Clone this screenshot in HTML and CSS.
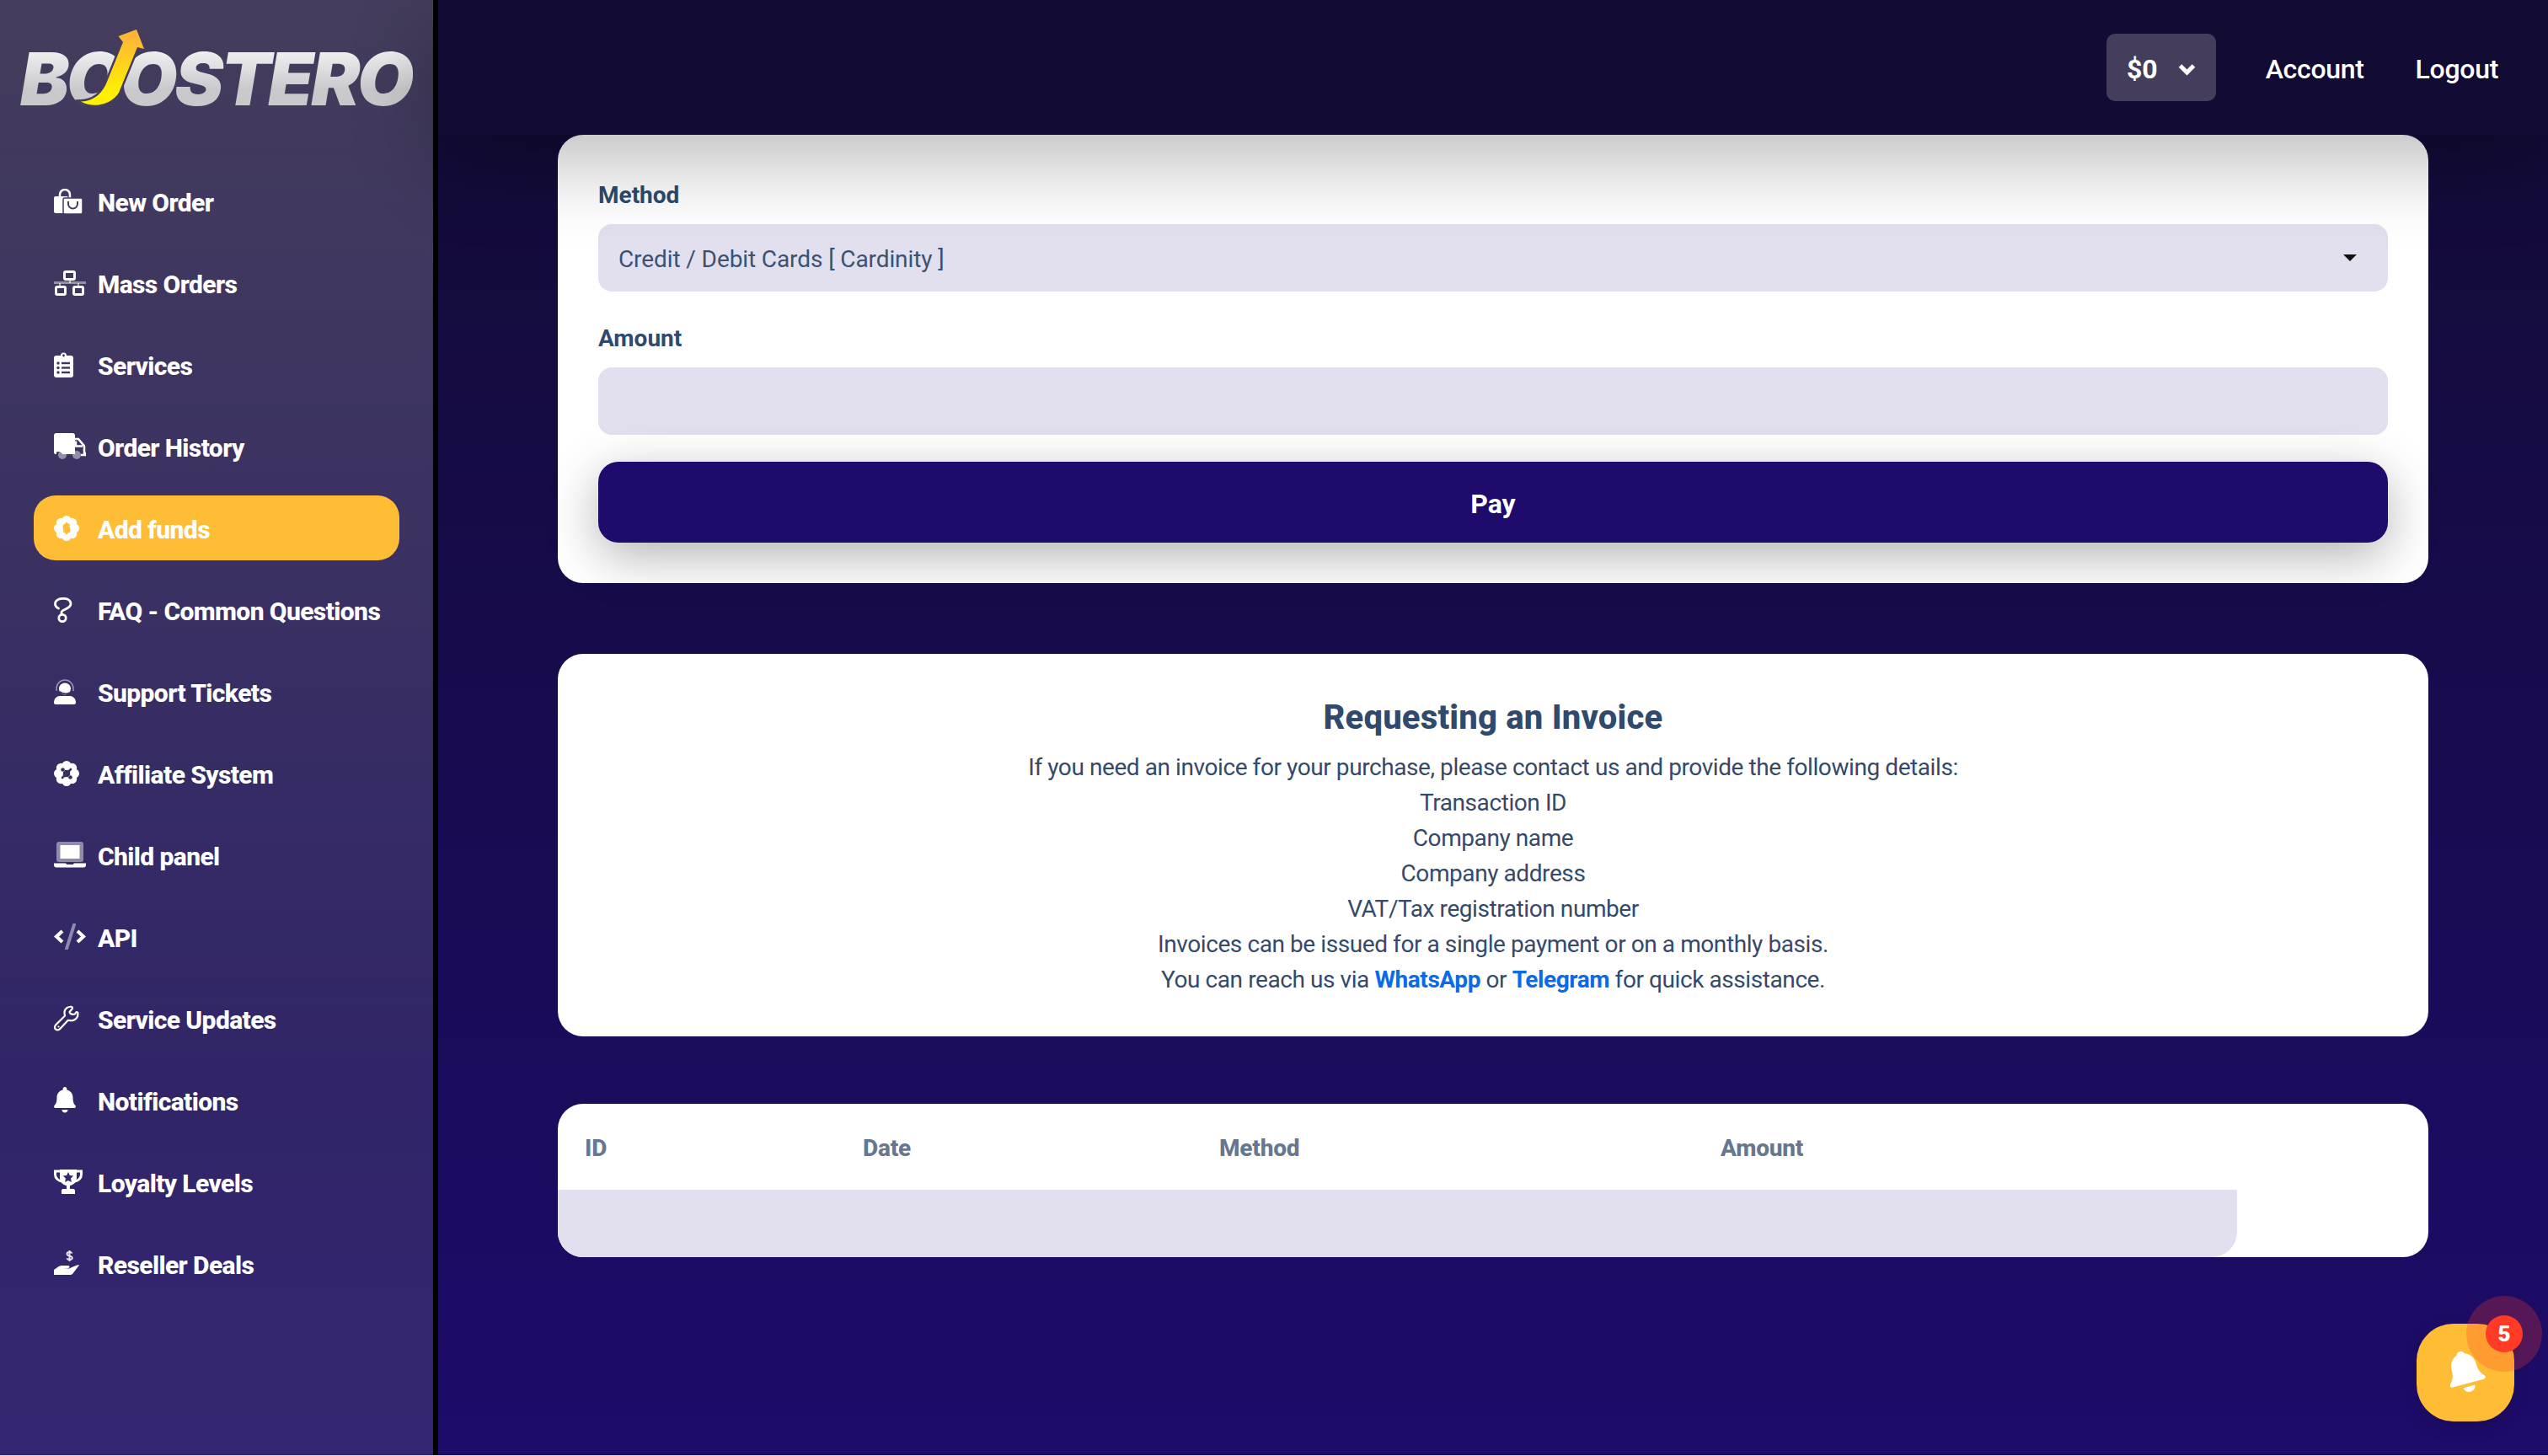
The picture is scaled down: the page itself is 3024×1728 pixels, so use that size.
FILE: index.html
```html
<!DOCTYPE html>
<html lang="en">
<head>
    <meta charset="UTF-8">
    <meta name="viewport" content="width=device-width, initial-scale=1.0">
    <title>Boostero - Add funds</title>
    <link rel="stylesheet" href="styles.css">
</head>
<body>
<div class="app">
    <aside class="sidebar">
        <a class="logo" href="#">
            <span class="logo-text">BOOSTERO</span>
            <svg class="logo-arrow" width="90" height="100" viewBox="90 30 90 100">
                <defs>
                    <linearGradient id="swoosh" x1="0" y1="0" x2="0" y2="1">
                        <stop offset="0" stop-color="#fdaf3c"/>
                        <stop offset="0.85" stop-color="#fff200"/>
                    </linearGradient>
                </defs>
                <path d="M96 120.500C112 120 122 110 127 97L146 50L140.500 43L162 35L171 58L163 56L141 110C134 122 114 130 96 120.500Z" fill="url(#swoosh)" stroke="#443d5c" stroke-width="5" paint-order="stroke"/>
            </svg>
        </a>
        <nav class="menu">
            <a class="menu-item" href="#">
                <span class="menu-icon"><svg width="34" height="30" viewBox="0 0 34 30"><path d="M7 10V7a6 6 0 0 1 12 0v5" fill="none" stroke="#fff" stroke-width="2.5"/><rect x="0" y="9" width="17" height="20" rx="2" fill="#fff"/><rect x="11" y="11" width="23" height="19" rx="2" fill="#fff" stroke="#443a60" stroke-width="1.5"/><path d="M17 15v3a5.500 5.500 0 0 0 11 0v-3" fill="none" stroke="#443a60" stroke-width="2"/></svg></span>
                New Order
            </a>
            <a class="menu-item" href="#">
                <span class="menu-icon"><svg width="38" height="30" viewBox="0 0 38 30"><rect x="0" y="13" width="38" height="3" fill="#fff" opacity=".45"/><path d="M19 11v4M7 15v5M29 15v5" stroke="#fff" stroke-width="2" opacity=".6"/><rect x="12.500" y="1.500" width="12" height="9" rx="1.500" fill="none" stroke="#fff" stroke-width="3"/><rect x="2.500" y="19.500" width="11" height="9" rx="1.500" fill="none" stroke="#fff" stroke-width="3"/><rect x="23.500" y="19.500" width="11" height="9" rx="1.500" fill="none" stroke="#fff" stroke-width="3"/></svg></span>
                Mass Orders
            </a>
            <a class="menu-item" href="#">
                <span class="menu-icon"><svg width="23" height="30" viewBox="0 0 23 30"><path d="M3 4h5a3.500 3.500 0 0 1 7 0h5a3 3 0 0 1 3 3v20a3 3 0 0 1-3 3H3a3 3 0 0 1-3-3V7a3 3 0 0 1 3-3Z" fill="#fff"/><g fill="#413660"><circle cx="11.500" cy="4" r="1.400"/><circle cx="5" cy="13" r="1.700"/><circle cx="5" cy="18.500" r="1.700"/><circle cx="5" cy="24" r="1.700"/><rect x="9" y="11.800" width="10" height="2.400"/><rect x="9" y="17.300" width="10" height="2.400"/><rect x="9" y="22.800" width="10" height="2.400"/></g></svg></span>
                Services
            </a>
            <a class="menu-item" href="#">
                <span class="menu-icon"><svg width="38" height="31" viewBox="0 0 38 31"><path d="M3 0h19a3 3 0 0 1 3 3v22H10a5 5 0 0 0-7-2.500V25H2a2 2 0 0 1-2-2V3a3 3 0 0 1 3-3Z" fill="#fff"/><path d="M25 7h4l6 7a3 3 0 0 1 1 2v8h2v2h-6M26 9.500v6h8" fill="none" stroke="#fff" stroke-width="2.500"/><g fill="#fff" opacity=".45"><circle cx="10" cy="26" r="5"/><circle cx="27" cy="26" r="5"/></g></svg></span>
                Order History
            </a>
            <a class="menu-item is-active" href="#">
                <span class="menu-icon"><svg width="30" height="30" viewBox="0 0 30 30"><g fill="#fff"><circle cx="15" cy="5.500" r="5.500"/><circle cx="15" cy="24.500" r="5.500"/><circle cx="5.500" cy="15" r="5.500"/><circle cx="24.500" cy="15" r="5.500"/><circle cx="8.300" cy="8.300" r="5.500"/><circle cx="21.700" cy="8.300" r="5.500"/><circle cx="8.300" cy="21.700" r="5.500"/><circle cx="21.700" cy="21.700" r="5.500"/></g><path d="M18.500 11.800C18 10.500 16.500 10 15 10c-2 0-3.500 1-3.500 2.500 0 3.500 7 1.800 7 5 0 1.500-1.500 2.500-3.500 2.500-1.600 0-3-.6-3.500-2M15 7.800v14.400" fill="none" stroke="#ffbd35" stroke-width="1.900"/></svg></span>
                Add funds
            </a>
            <a class="menu-item" href="#">
                <span class="menu-icon"><svg width="22" height="30" viewBox="0 0 22 30"><path d="M9 20.500v-3c0-3.500 11-3.500 11-10 0-4-4-6.200-9-6.200S1.500 3.500 1.500 7.500c0 2.500 1.500 4.500 4 5.500" fill="none" stroke="#fff" stroke-width="2.800" stroke-linecap="round"/><circle cx="10" cy="24.500" r="4.200" fill="none" stroke="#fff" stroke-width="2.800"/></svg></span>
                FAQ - Common Questions
            </a>
            <a class="menu-item" href="#">
                <span class="menu-icon"><svg width="26" height="30" viewBox="0 0 26 30"><path d="M3 14V11a10 10 0 0 1 20 0v3" fill="none" stroke="#fff" stroke-width="1.500" opacity=".5"/><circle cx="13" cy="11.500" r="7" fill="#fff"/><path d="M7 15c3 3 9 3 12 1" fill="none" stroke="#3e3262" stroke-width="1.800"/><path d="M0 28c0-5 3.500-8 7-8h12c3.500 0 7 3 7 8a2 2 0 0 1-2 2H2a2 2 0 0 1-2-2Z" fill="#fff"/></svg></span>
                Support Tickets
            </a>
            <a class="menu-item" href="#">
                <span class="menu-icon"><svg width="30" height="30" viewBox="0 0 30 30"><g fill="#fff"><circle cx="15" cy="5.500" r="5.500"/><circle cx="15" cy="24.500" r="5.500"/><circle cx="5.500" cy="15" r="5.500"/><circle cx="24.500" cy="15" r="5.500"/><circle cx="8.300" cy="8.300" r="5.500"/><circle cx="21.700" cy="8.300" r="5.500"/><circle cx="8.300" cy="21.700" r="5.500"/><circle cx="21.700" cy="21.700" r="5.500"/></g><g fill="#3d3063"><circle cx="10.500" cy="10.500" r="2.300"/><circle cx="19.500" cy="19.500" r="2.300"/></g><path d="M20 10 10 20" stroke="#3d3063" stroke-width="2.600" stroke-linecap="round"/></svg></span>
                Affiliate System
            </a>
            <a class="menu-item" href="#">
                <span class="menu-icon"><svg width="38" height="31" viewBox="0 0 38 31"><rect x="3" y="0" width="32" height="24" rx="3" fill="#fff" opacity=".45"/><rect x="7.500" y="4" width="23" height="16" fill="#fff"/><path d="M0 25.500h14l1.500 1.500h7l1.500-1.500h14v2a3 3 0 0 1-3 3H3a3 3 0 0 1-3-3Z" fill="#fff"/></svg></span>
                Child panel
            </a>
            <a class="menu-item" href="#">
                <span class="menu-icon"><svg width="38" height="31" viewBox="0 0 38 31"><path d="M10 9 3 15.500 10 22M28 9l7 6.500-7 6.500" fill="none" stroke="#fff" stroke-width="4.200"/><path d="M24 1.500 15 30" stroke="#fff" stroke-width="4" stroke-linecap="round" opacity=".45"/></svg></span>
                API
            </a>
            <a class="menu-item" href="#">
                <span class="menu-icon"><svg width="30" height="31" viewBox="0 0 30 31"><path d="M25 10.500c-3.500 1-6.500-.5-6.500-2.500l3-3.500c.8-1 .5-2.500-1-2.700-3.500-.3-7.500 2-8 6.200-.2 2 .2 3.200.6 4.500L2.500 23c-2 2-1.800 4.300-.5 5.500s3.500 1.500 5.300-.5l9.500-10.200c4 1 8.300.2 10.700-3.500.8-1.400 1-3.300 1-4.800 0-1.300-1.500-1.800-2.500-.8Z" fill="none" stroke="#fff" stroke-width="2.200" stroke-linejoin="round"/><circle cx="5.500" cy="25.500" r="1.100" fill="#fff"/></svg></span>
                Service Updates
            </a>
            <a class="menu-item" href="#">
                <span class="menu-icon"><svg width="26" height="31" viewBox="0 0 26 31"><path d="M13 0c1.400 0 2.400 1 2.400 2.500v.9C20 4.500 22.500 8 22.500 12.500c0 6 1.500 8 3 9.500.7.800.5 3-1.500 3H2c-2 0-2.200-2.200-1.500-3 1.500-1.500 3-3.500 3-9.500 0-4.500 2.500-8 7.100-9.100v-.9C10.600 1 11.600 0 13 0Z" fill="#fff"/><path d="M9.500 27h7c0 2-1.500 3.500-3.500 3.500S9.500 29 9.500 27Z" fill="#fff"/></svg></span>
                Notifications
            </a>
            <a class="menu-item" href="#">
                <span class="menu-icon"><svg width="34" height="31" viewBox="0 0 34 31"><path d="M7 1h20v10c0 5-4 8.500-8 9v4h4c1.500 0 2 1 2 2.500V30H9v-3.500C9 25 9.500 24 11 24h4v-4c-4-.5-8-4-8-9Z" fill="#fff"/><path d="M7 3H1.500v4c0 4.500 4 7.500 8 8M27 3h5.500v4c0 4.500-4 7.500-8 8" fill="none" stroke="#fff" stroke-width="3"/><path d="m17 4 1.900 4 4.300.6-3.100 3 .7 4.300-3.800-2-3.800 2 .7-4.300-3.100-3 4.300-.6Z" fill="#35266f"/></svg></span>
                Loyalty Levels
            </a>
            <a class="menu-item" href="#">
                <span class="menu-icon"><svg width="34" height="31" viewBox="0 0 34 31"><path d="M21.500 3.500c-.4-1-1.500-1.500-3-1.500-1.800 0-3 .8-3 2.200 0 3 6.300 1.700 6.300 4.600 0 1.400-1.300 2.200-3.200 2.200-1.500 0-2.700-.6-3.200-1.700M18.500 0v13" fill="none" stroke="#fff" stroke-width="1.900" opacity=".9"/><path d="M0 23l5-3.500c1.500-1 3-1.500 5-1.500h7c2 0 2 3 0 3h-5l6 .5 8-3.500c2-1 3.500-1 4-.5L22 28c-1 .8-2 1-3 1H0Z" fill="#fff"/></svg></span>
                Reseller Deals
            </a>
        </nav>
    </aside>

    <main class="main">
        <header class="topbar">
            <a class="balance" href="#">$0
                <svg width="21" height="15" viewBox="0 0 21 15"><path d="M2.500 3 10.500 11 18.500 3" fill="none" stroke="#fff" stroke-width="5"/></svg>
            </a>
            <a class="top-link" href="#">Account</a>
            <a class="top-link" href="#">Logout</a>
        </header>

        <div class="content">
            <section class="card pay-card">
                <label class="field-label">Method</label>
                <div class="select-wrap">
                    <select class="field">
                        <option>Credit / Debit Cards [ Cardinity ]</option>
                    </select>
                </div>
                <label class="field-label">Amount</label>
                <input class="field" type="text">
                <button class="pay-btn">Pay</button>
            </section>

            <section class="card invoice-card">
                <h2>Requesting an Invoice</h2>
                <p>If you need an invoice for your purchase, please contact us and provide the following details:</p>
                <p>Transaction ID</p>
                <p>Company name</p>
                <p>Company address</p>
                <p>VAT/Tax registration number</p>
                <p>Invoices can be issued for a single payment or on a monthly basis.</p>
                <p>You can reach us via <a href="#">WhatsApp</a> or <a href="#">Telegram</a> for quick assistance.</p>
            </section>

            <section class="card table-card">
                <table class="history">
                    <thead>
                        <tr>
                            <th class="col-id">ID</th>
                            <th class="col-date">Date</th>
                            <th class="col-method">Method</th>
                            <th class="col-amount">Amount</th>
                        </tr>
                    </thead>
                    <tbody>
                        <tr><td colspan="4"></td></tr>
                    </tbody>
                </table>
            </section>
        </div>
    </main>
</div>

<button class="bell-btn">
    <svg width="50" height="56" viewBox="0 0 50 56"><g transform="rotate(-15 25 28)"><circle cx="25" cy="7" r="5" fill="#fff"/><path d="M25 5c9 0 15 7 15 16 0 8 2 12 6 16 1.500 2 .5 4-2 4H6c-2.500 0-3.500-2-2-4 4-4 6-8 6-16 0-9 6-16 15-16Z" fill="#fff"/><path d="M18 45h14c0 4-3 6.500-7 6.500S18 49 18 45Z" fill="#fff"/></g></svg>
    <span class="bell-halo"></span>
    <span class="bell-count">5</span>
</button>
</body>
</html>
```

FILE: styles.css
```css
* {
    box-sizing: border-box;
}

html {
    background: #e2e0ee;
}

body {
    margin: 0;
    height: 1727px;
    overflow: hidden;
    font-family: Roboto, "Liberation Sans", sans-serif;
    color: #2f4a6d;
    background: linear-gradient(180deg, #120b33 0%, #1e0b6b 100%);
}

a {
    text-decoration: none;
}

.app {
    display: flex;
    height: 100%;
}

/* sidebar */
.sidebar {
    width: 520px;
    flex-shrink: 0;
    padding: 0 40px;
    border-right: 6px solid #000;
    background: linear-gradient(180deg, #443d5c 0%, #312568 75%, #352573 100%);
}

.logo {
    display: block;
    position: relative;
    height: 200px;
    margin: 0 -16px;
}

.logo-text {
    display: block;
    padding-top: 46px;
    font-family: Inter, Roboto, sans-serif;
    font-size: 87px;
    line-height: 96px;
    font-weight: 900;
    font-style: italic;
    letter-spacing: -3.3px;
    white-space: nowrap;
    background: linear-gradient(180deg, #fff 30%, #c9c9cc 75%);
    -webkit-background-clip: text;
    background-clip: text;
    color: transparent;
}

.logo-arrow {
    position: absolute;
    left: 66px;
    top: 30px;
}

.menu {
    display: flex;
    flex-direction: column;
    gap: 20px;
}

.menu-item {
    display: flex;
    align-items: center;
    height: 77px;
    padding: 4px 0 0 24px;
    border-radius: 26px;
    font-size: 30px;
    font-weight: 800;
    letter-spacing: -0.6px;
    color: #fff;
}

.menu-item.is-active {
    background: #ffbd35;
}

.menu-icon {
    display: flex;
    align-items: center;
    width: 52px;
    flex-shrink: 0;
    margin-top: -4px;
}

/* top bar */
.main {
    flex: 1;
    min-width: 0;
}

.topbar {
    position: relative;
    z-index: 2;
    display: flex;
    align-items: center;
    justify-content: flex-end;
    gap: 61px;
    height: 160px;
    padding-right: 59px;
    background: #120b33;
    box-shadow: 0 30px 100px rgba(0, 0, 0, 0.28);
}

.balance {
    display: flex;
    align-items: center;
    gap: 24px;
    height: 80px;
    margin-right: -2px;
    padding: 4px 24px 0;
    border-radius: 10px;
    background: #443d5c;
    color: #fff;
    font-size: 32px;
    font-weight: 700;
}

.top-link {
    padding-top: 4px;
    color: #fff;
    font-size: 32px;
    font-weight: 500;
    letter-spacing: -0.3px;
}

/* cards */
.content {
    display: flex;
    flex-direction: column;
    padding: 0 142px;
}

.card {
    border-radius: 30px;
    background: #fff;
}

.pay-card {
    padding: 48px 48px 48px;
}

.field-label {
    display: block;
    height: 58px;
    font-size: 28px;
    line-height: 47px;
    font-weight: 700;
}

.pay-card .field-label + .field,
.select-wrap {
    margin-bottom: 32px;
}

.field {
    display: block;
    width: 100%;
    height: 80px;
    padding: 3px 24px 0;
    border: none;
    border-radius: 16px;
    background: #e2e0ee;
    font-family: inherit;
    font-size: 28px;
    letter-spacing: -0.1px;
    color: #3b5273;
    appearance: none;
}

.select-wrap {
    position: relative;
}

.select-wrap::after {
    content: "";
    position: absolute;
    right: 37px;
    top: 36px;
    border-left: 8px solid transparent;
    border-right: 8px solid transparent;
    border-top: 8px solid #111;
}

.pay-btn {
    display: block;
    width: 100%;
    height: 96px;
    padding-top: 4px;
    border: none;
    border-radius: 24px;
    background: #1e0b6b;
    color: #fff;
    font-family: inherit;
    font-size: 32px;
    font-weight: 700;
    box-shadow: 0 16px 60px rgba(0, 0, 0, 0.3);
}

.invoice-card {
    margin-top: 84px;
    height: 454px;
    padding-top: 49px;
    text-align: center;
    font-size: 28px;
    line-height: 42px;
    letter-spacing: -0.42px;
}

.invoice-card h2 {
    margin: 0 0 11px;
    font-size: 40px;
    line-height: 54px;
    font-weight: 800;
    letter-spacing: 0.2px;
}

.invoice-card p {
    margin: 0;
    color: #35496b;
}

.invoice-card a {
    color: #0a6ae8;
    font-weight: 700;
}

/* history table */
.table-card {
    margin-top: 80px;
    height: 182px;
    padding-right: 227px;
}

.history {
    width: 100%;
    height: 100%;
    border-collapse: collapse;
    table-layout: fixed;
}

.history th {
    height: 102px;
    padding: 2px 0 0 32px;
    text-align: left;
    font-size: 28px;
    font-weight: 800;
    letter-spacing: -0.2px;
    color: #66788f;
}

.history td {
    height: 80px;
    padding: 0;
    background: #e2e0ee;
    border-radius: 0 0 30px 30px;
}

.col-id { width: 330px; }
.col-date { width: 423px; }
.col-method { width: 595px; }

/* floating bell */
.bell-btn {
    position: fixed;
    left: 2868px;
    top: 1571px;
    display: flex;
    align-items: center;
    justify-content: center;
    width: 116px;
    height: 116px;
    padding: 0;
    border: none;
    border-radius: 44px;
    background: #ffbd35;
    box-shadow: 0 6px 20px rgba(0, 0, 0, 0.15);
}

.bell-halo {
    position: absolute;
    right: -33px;
    top: -33px;
    width: 90px;
    height: 90px;
    border-radius: 50%;
    background: rgba(255, 60, 40, 0.25);
}

.bell-count {
    position: absolute;
    right: -10px;
    top: -10px;
    width: 44px;
    height: 44px;
    border-radius: 50%;
    background: #ff3b26;
    color: #fff;
    font-family: Roboto, sans-serif;
    font-size: 26px;
    font-weight: 900;
    line-height: 44px;
    text-align: center;
}
```
